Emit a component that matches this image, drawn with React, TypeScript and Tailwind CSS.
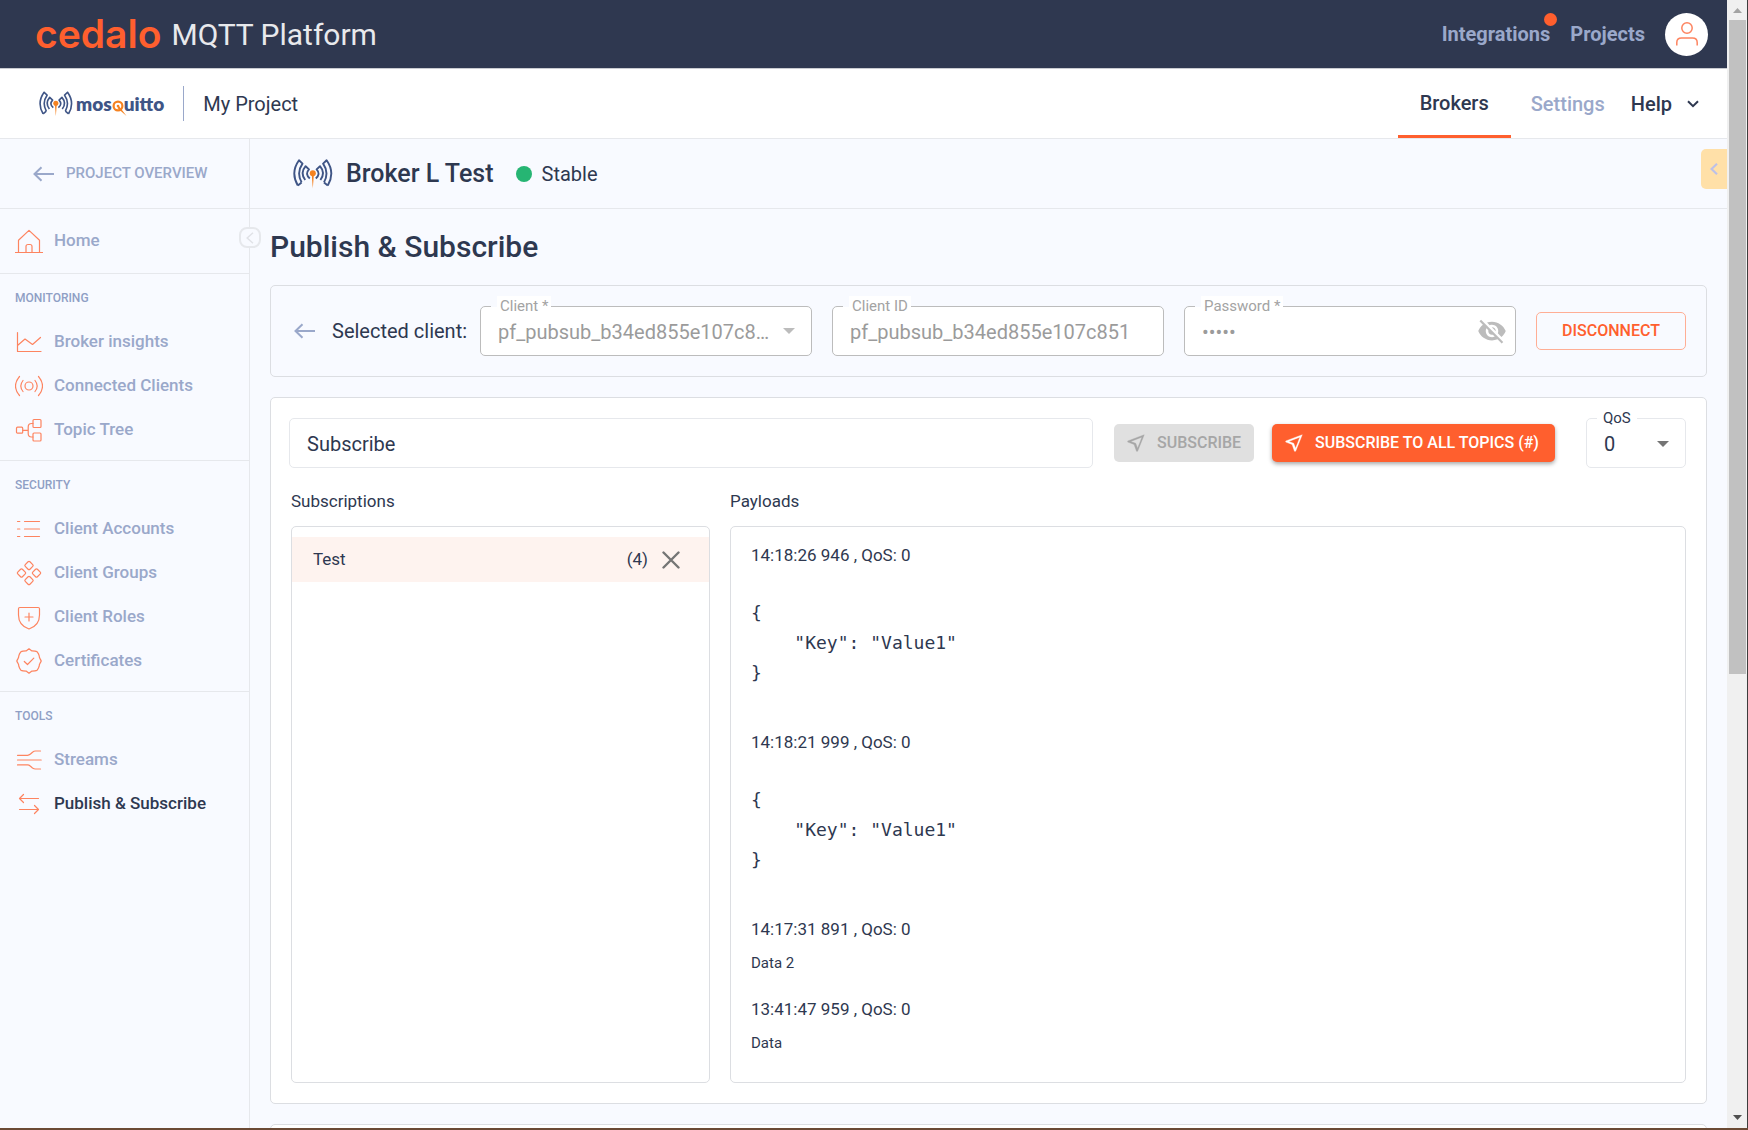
import type { ReactNode } from "react";

function Icon({ children }: { children: ReactNode }) {
  return (
    <svg
      className="h-7 w-7 shrink-0"
      viewBox="0 0 28 28"
      fill="none"
      stroke="#fd8460"
      strokeWidth="1.2"
      strokeLinecap="round"
      strokeLinejoin="round"
      aria-hidden="true"
    >
      {children}
    </svg>
  );
}

const icons: Record<string, ReactNode> = {
  home: (
    <Icon>
      <path d="M0.5 25.5H27.5M3.5 25.5V13.2L14 3.4L24.5 13.2V25.5M11 25.5V19.5Q11 17.5 13 17.5H15Q17 17.5 17 19.5V25.5" />
    </Icon>
  ),
  insights: (
    <Icon>
      <path d="M2.5 4.5V23.5H26M2.5 17.5L10 11L17.5 16.5L25.5 9.5" />
    </Icon>
  ),
  clients: (
    <Icon>
      <circle cx="14" cy="14" r="4" />
      <path d="M8 8.5Q3.6 14 8 19.5M20 8.5Q24.4 14 20 19.5M4.5 4.5Q-3.5 14 4.5 23.5M23.5 4.5Q31.5 14 23.5 23.5" />
    </Icon>
  ),
  tree: (
    <Icon>
      <rect x="1.5" y="11.2" width="6.2" height="6" rx="1" />
      <rect x="18" y="3.5" width="8" height="8" rx="1" />
      <rect x="18" y="17" width="8" height="8" rx="1" />
      <path d="M7.7 14.3H13.2M18 7.5H16.5Q13.2 7.5 13.2 11V17.5Q13.2 21 16.5 21H18" />
    </Icon>
  ),
  accounts: (
    <Icon>
      <path d="M2.5 6.5H4.8M9.5 6.5H24.5M2.5 14H4.8M9.5 14H24.5M2.5 21.5H4.8M9.5 21.5H24.5" />
    </Icon>
  ),
  groups: (
    <Icon>
      <rect x="10.7" y="3.2" width="6.6" height="6.6" rx="1.3" transform="rotate(45 14 6.5)" />
      <rect x="10.7" y="18.2" width="6.6" height="6.6" rx="1.3" transform="rotate(45 14 21.5)" />
      <rect x="3.2" y="10.7" width="6.6" height="6.6" rx="1.3" transform="rotate(45 6.5 14)" />
      <rect x="18.2" y="10.7" width="6.6" height="6.6" rx="1.3" transform="rotate(45 21.5 14)" />
    </Icon>
  ),
  roles: (
    <Icon>
      <path d="M4.8 4.5H23.2Q24.5 4.5 24.5 5.8V12C24.5 19 20 24 14 26C8 24 3.5 19 3.5 12V5.8Q3.5 4.5 4.8 4.5ZM14 10V18M10 14H18" />
    </Icon>
  ),
  certificates: (
    <Icon>
      <path d="M14 1.8L16.6 3.8C19.4 3.9 20.5 3.9 21.9 4.6C22.8 5.8 23.6 6.5 24.2 8.8C24 11 25.5 12 26.2 14C25.5 16 24 17 24.2 19.2C23.6 21.5 22.8 22.2 21.9 23.4C20.5 24.1 19.4 24.1 16.6 24.2L14 26.2L11.4 24.2C8.6 24.1 7.5 24.1 6.1 23.4C5.2 22.2 4.4 21.5 3.8 19.2C4 17 2.5 16 1.8 14C2.5 12 4 11 3.8 8.8C4.4 6.5 5.2 5.8 6.1 4.6C7.5 3.9 8.6 3.9 11.4 3.8Z" />
      <path d="M9.3 14.5L12.5 17.5L18.8 11.2" />
    </Icon>
  ),
  streams: (
    <Icon>
      <path d="M2.5 14H26.2M2.5 9.3H12.5Q14 9.3 15.5 8L17.5 6.2Q19 5 20.5 5H25.5M2.5 18.9H12.5Q14 18.9 15.5 20.2L17.5 22Q19 23 20.5 23H25.5" />
    </Icon>
  ),
  pubsub: (
    <Icon>
      <path d="M23.5 8.5H4.5M8.5 4.5L4.5 8.5L8.5 12.5M4.5 19.5H23.5M19.5 15.5L23.5 19.5L19.5 23.5" />
    </Icon>
  ),
};

function Waves({ className }: { className: string }) {
  return (
    <svg className={className} viewBox="0 0 40 30" fill="none" aria-hidden="true">
      <g stroke="#3f5586" strokeWidth="1.9" strokeLinejoin="round">
        <path d="M4.8 26.5Q-2.8 13.5 6 1.2L9.5 4.6Q3.2 13.5 8.6 23.4" />
        <path d="M12.2 21Q6.8 14 12.6 7.2L16 10.4Q11.6 15 16.8 19.4" />
        <path d="M8.6 23.4L4.8 26.5" />
        <path d="M34.8 26.5Q42.4 13.5 33.6 1.2L30.1 4.6Q36.4 13.5 31 23.4" />
        <path d="M27.4 21Q32.8 14 27 7.2L23.6 10.4Q28 15 22.8 19.4" />
        <path d="M31 23.4L34.8 26.5" />
      </g>
      <circle cx="19.8" cy="14.2" r="3" fill="#f58220" />
      <path d="M18.7 15H20.9L19.8 29.5Z" fill="#f58220" />
    </svg>
  );
}

function MosquittoLogo() {
  return (
    <a href="#mosquitto" className="flex items-center gap-[3px]" aria-label="mosquitto">
      <Waves className="h-[26px] w-[34px]" />
      <span className="font-[Lato,sans-serif] text-[19px] leading-6 font-extrabold whitespace-nowrap text-[#3f5586]">
        mos
        <svg className="inline-block h-4 w-3 overflow-visible align-[-5px]" viewBox="0 0 12 16" fill="none" role="img" aria-label="q">
          <circle cx="6" cy="6" r="4.4" stroke="#f58220" strokeWidth="2.2" />
          <circle cx="6" cy="6" r="1.3" fill="#f58220" />
          <path d="M7 6L14.5 16L5.4 8Z" fill="#f58220" />
        </svg>
        uitto
      </span>
    </a>
  );
}

function ArrowLeft() {
  return (
    <svg className="h-4 w-[21px] shrink-0" viewBox="0 0 21 16" fill="none" stroke="#9aa8ca" strokeWidth="2" aria-hidden="true">
      <path d="M21 8H1.5M8.5 1.2L1.5 8L8.5 14.8" />
    </svg>
  );
}

function Plane() {
  return (
    <svg className="h-[22px] w-[22px] shrink-0" viewBox="0 0 24 24" fill="currentColor" stroke="currentColor" strokeWidth="0.4" aria-hidden="true">
      <path d="M18.4 5.6L15.8 12.6L13.7 17.7L12 13.1L11.7 12.3L10.9 12L6.3 10.3L18.4 5.6M21 3L3 9.8V11L9.9 13.6L12.5 21H13.8L21 3Z" />
    </svg>
  );
}

function FieldLabel({ htmlFor, children }: { htmlFor: string; children: ReactNode }) {
  return (
    <label
      htmlFor={htmlFor}
      className="absolute -top-[10px] left-[17px] bg-white px-[3px] text-[15px] leading-5 text-[#a3a3a3] before:absolute before:top-[10px] before:-left-[6px] before:h-px before:w-[6px] before:bg-[#f8faff]"
    >
      {children}
    </label>
  );
}

const fieldClass =
  "h-[50px] w-full appearance-none rounded-[5px] border border-[#bcbcbc] bg-white pt-[2px] pl-[17px] text-[20px] text-[#9b9b9b] outline-none";

function NavItem({ icon, label, active }: { icon: string; label: string; active?: boolean }) {
  return (
    <li>
      <a
        href="#nav"
        className={
          active
            ? "flex h-11 items-center gap-[11px] text-[17px] font-medium text-[#2e3850]"
            : "flex h-11 items-center gap-[11px] text-[17px] font-medium text-[#9aa8ca]"
        }
      >
        {icons[icon]}
        {label}
      </a>
    </li>
  );
}

function NavSection({ title, items }: { title: string; items: [string, string][] }) {
  return (
    <section className="border-t border-[#e6e8ec] pb-2 pl-[15px]">
      <h2 className="h-[46px] pt-[14px] text-[12px] leading-5 font-medium text-[#8f9fc5]">{title}</h2>
      <ul>
        {items.map(([icon, label]) => (
          <NavItem key={label} icon={icon} label={label} active={icon === "pubsub"} />
        ))}
      </ul>
    </section>
  );
}

const messages = [
  { time: "14:18:26 946", json: true, body: '{\n    "Key": "Value1"\n}' },
  { time: "14:18:21 999", json: true, body: '{\n    "Key": "Value1"\n}' },
  { time: "14:17:31 891", json: false, body: "Data 2" },
  { time: "13:41:47 959", json: false, body: "Data" },
];

export default function App() {
  return (
    <div className="flex h-screen overflow-hidden border-b-2 border-[#6b4a35] bg-[#f8faff] font-[Roboto,sans-serif] text-[#2e3850]">
      <div className="flex min-w-0 flex-1 flex-col">
        <header className="flex h-[69px] shrink-0 items-center border-b border-[#c9cbd0] bg-[#2f3850] pr-[19px] pl-[35px]">
          <a href="#home" className="font-[Inter,sans-serif] text-[39px] leading-[44px] font-semibold text-[#ff5f2e]">
            cedalo
          </a>
          <span className="ml-[10px] text-[30px] text-[#e8e9ec]">MQTT Platform</span>
          <nav className="ml-auto flex items-center gap-5 text-[20px] font-bold text-[#9aa8ca]">
            <a href="#integrations" className="relative">
              Integrations
              <span className="absolute -top-[6px] -right-[7px] h-[13px] w-[13px] rounded-full bg-[#ff5f2e]" />
            </a>
            <a href="#projects">Projects</a>
            <button aria-label="Account" className="flex h-[43px] w-[43px] items-center justify-center rounded-full bg-white">
              <svg className="h-6 w-[22px]" viewBox="0 0 22 24" fill="none" stroke="#fd8460" strokeWidth="1.5" aria-hidden="true">
                <circle cx="11" cy="6" r="5.2" />
                <path d="M0.8 23.5V20.5Q0.8 16 5.5 16H16.5Q21.2 16 21.2 20.5V23.5" />
              </svg>
            </button>
          </nav>
        </header>

        <div className="flex h-[70px] shrink-0 items-center border-b border-[#e6e8ec] bg-white pr-7 pl-[39px]">
          <MosquittoLogo />
          <div className="ml-[19px] h-[35px] w-px bg-[#9aa8ca]" />
          <span className="ml-[19px] text-[20px]">My Project</span>
          <nav className="ml-auto flex h-full items-center text-[20px] font-medium">
            <a href="#brokers" className="flex h-full items-center border-b-[3px] border-[#ff5f2e] px-[22px] pt-[2px]">
              Brokers
            </a>
            <a href="#settings" className="ml-5 text-[#9aa8ca]">
              Settings
            </a>
            <button className="ml-[26px] flex items-center gap-[15px]">
              Help
              <svg className="h-2 w-3" viewBox="0 0 12 8" fill="none" stroke="#2e3850" strokeWidth="2" aria-hidden="true">
                <path d="M1 1.2L6 6.2L11 1.2" />
              </svg>
            </button>
          </nav>
        </div>

        <div className="flex min-h-0 flex-1">
          <aside className="relative w-[250px] shrink-0 border-r border-[#e6e8ec]">
            <a
              href="#overview"
              className="flex h-[70px] items-center gap-3 border-b border-[#e6e8ec] pl-[33px] text-[15px] font-medium text-[#9aa8ca]"
            >
              <ArrowLeft />
              PROJECT OVERVIEW
            </a>
            <ul className="h-16 pt-[10px] pl-[15px]">
              <NavItem icon="home" label="Home" />
            </ul>
            <NavSection
              title="MONITORING"
              items={[
                ["insights", "Broker insights"],
                ["clients", "Connected Clients"],
                ["tree", "Topic Tree"],
              ]}
            />
            <NavSection
              title="SECURITY"
              items={[
                ["accounts", "Client Accounts"],
                ["groups", "Client Groups"],
                ["roles", "Client Roles"],
                ["certificates", "Certificates"],
              ]}
            />
            <NavSection
              title="TOOLS"
              items={[
                ["streams", "Streams"],
                ["pubsub", "Publish & Subscribe"],
              ]}
            />
            <button
              aria-label="Collapse sidebar"
              className="absolute top-[88px] -right-3 flex h-[21px] w-[22px] items-center justify-center rounded-lg border-2 border-[#e6e8ec] bg-[#f8faff]"
            >
              <svg className="h-3 w-2" viewBox="0 0 8 12" fill="none" stroke="#e0e2e7" strokeWidth="1.5" aria-hidden="true">
                <path d="M7 0.8L1.2 6L7 11.2" />
              </svg>
            </button>
          </aside>

          <main className="flex min-w-0 flex-1 flex-col">
            <div className="relative flex h-[70px] shrink-0 items-center border-b border-[#e6e8ec] pl-[43px]">
              <Waves className="h-[30px] w-10" />
              <h2 className="ml-[13px] text-[25px] font-medium">Broker L Test</h2>
              <span className="ml-[22px] h-4 w-4 rounded-full bg-[#26b573]" />
              <span className="ml-[10px] text-[20px]">Stable</span>
              <button
                aria-label="Open help panel"
                className="absolute top-[10px] right-0 flex h-10 w-[26px] items-center justify-center rounded-l-[5px] bg-[#ffe0a8]"
              >
                <svg className="h-3 w-2" viewBox="0 0 8 12" fill="none" stroke="#bcc0e8" strokeWidth="2.2" aria-hidden="true">
                  <path d="M7 0.8L1.5 6L7 11.2" />
                </svg>
              </button>
            </div>

            <div className="flex flex-1 flex-col overflow-hidden px-5 pt-5">
              <h1 className="mb-5 text-[30px] leading-9 font-medium">Publish &amp; Subscribe</h1>

              <section className="flex shrink-0 items-center gap-5 rounded-[5px] border border-[#dcdee2] py-5 pr-5 pl-[23px]">
                <div className="-mr-[7px] flex items-center gap-[17px]">
                  <button aria-label="Back">
                    <ArrowLeft />
                  </button>
                  <span className="text-[20px] whitespace-nowrap">Selected client:</span>
                </div>
                <div className="relative min-w-0 flex-1">
                  <select id="client" disabled className={fieldClass + " pr-10 text-ellipsis opacity-100"}>
                    <option>pf_pubsub_b34ed855e107c8...</option>
                  </select>
                  <FieldLabel htmlFor="client">Client *</FieldLabel>
                  <svg className="absolute top-[22px] right-[17px] h-[6px] w-3" viewBox="0 0 12 6" fill="#bcbcbc" aria-hidden="true">
                    <path d="M0 0H12L6 6Z" />
                  </svg>
                </div>
                <div className="relative min-w-0 flex-1">
                  <input id="client-id" readOnly value="pf_pubsub_b34ed855e107c851" className={fieldClass} />
                  <FieldLabel htmlFor="client-id">Client ID</FieldLabel>
                </div>
                <div className="relative min-w-0 flex-1">
                  <input id="password" type="password" readOnly value="abcde" className={fieldClass} />
                  <FieldLabel htmlFor="password">Password *</FieldLabel>
                  <button aria-label="Show password" className="absolute top-[10px] right-[9px]">
                    <svg className="h-[30px] w-[30px]" viewBox="0 0 24 24" fill="#bcbcbc" aria-hidden="true">
                      <path d="M12 7c2.76 0 5 2.24 5 5 0 .65-.13 1.26-.36 1.83l2.92 2.92c1.51-1.26 2.7-2.89 3.43-4.75-1.73-4.39-6-7.5-11-7.5-1.4 0-2.74.25-3.98.7l2.16 2.16C10.74 7.13 11.35 7 12 7zM2 4.27l2.28 2.28.46.46C3.08 8.3 1.78 10.02 1 12c1.73 4.39 6 7.5 11 7.5 1.55 0 3.03-.3 4.38-.84l.42.42L19.73 22 21 20.73 3.27 3 2 4.27zM7.53 9.8l1.55 1.55c-.05.21-.08.43-.08.65 0 1.66 1.34 3 3 3 .22 0 .44-.03.65-.08l1.55 1.55c-.67.33-1.41.53-2.2.53-2.76 0-5-2.24-5-5 0-.79.2-1.53.53-2.2zm4.31-.78l3.15 3.15.02-.16c0-1.66-1.34-3-3-3l-.17.01z" />
                    </svg>
                  </button>
                </div>
                <button className="flex h-[38px] w-[150px] items-center justify-center rounded-[5px] border border-[#ffae95] text-[16px] font-medium text-[#ff5f2e]">
                  DISCONNECT
                </button>
              </section>

              <section className="mt-5 shrink-0 rounded-[5px] border border-[#dcdee2] bg-white px-5 py-5">
                <div className="-ml-[2px] flex items-center">
                  <input
                    aria-label="Subscribe"
                    placeholder="Subscribe"
                    className="h-[50px] min-w-0 flex-1 rounded-[5px] border border-[#e6e8ec] pt-[2px] pl-[17px] text-[20px] outline-none placeholder:text-[#2e3850]"
                  />
                  <button
                    disabled
                    className="ml-[21px] flex h-[38px] w-[140px] items-center gap-[10px] rounded-[5px] bg-[#e0e0e0] pl-[11px] text-[16px] font-medium text-[#a6a6a6]"
                  >
                    <Plane />
                    SUBSCRIBE
                  </button>
                  <button className="ml-[18px] flex h-[38px] w-[283px] items-center gap-[10px] rounded-[5px] bg-[#ff5f2e] pl-[11px] text-[16px] font-medium whitespace-nowrap text-white shadow-[0_2px_4px_rgba(0,0,0,0.35)]">
                    <Plane />
                    SUBSCRIBE TO ALL TOPICS (#)
                  </button>
                  <div className="relative ml-[31px] w-[100px]">
                    <select
                      id="qos"
                      defaultValue="0"
                      className="h-[50px] w-full appearance-none rounded-[5px] border border-[#e6e8ec] bg-white pt-[2px] pl-[17px] text-[20px] outline-none"
                    >
                      <option>0</option>
                      <option>1</option>
                      <option>2</option>
                    </select>
                    <label htmlFor="qos" className="absolute -top-[10px] left-[11px] bg-white px-[6px] text-[15px] leading-5">
                      QoS
                    </label>
                    <svg className="absolute top-[23px] right-[17px] h-[6px] w-3" viewBox="0 0 12 6" fill="#757575" aria-hidden="true">
                      <path d="M0 0H12L6 6Z" />
                    </svg>
                  </div>
                </div>

                <div className="mt-5 flex gap-5">
                  <div className="w-[419px] shrink-0">
                    <h3 className="text-[17px] leading-[26px]">Subscriptions</h3>
                    <ul className="mt-3 h-[557px] rounded-[5px] border border-[#dcdee2] pt-[10px]">
                      <li className="flex h-[45px] items-center bg-[#fef3ef] pr-[29px] pl-[21px] text-[17px]">
                        Test
                        <span className="ml-auto">(4)</span>
                        <button aria-label="Remove subscription" className="ml-[14px]">
                          <svg className="h-[18px] w-[18px]" viewBox="0 0 18 18" stroke="#757575" strokeWidth="2.4" strokeLinecap="round" aria-hidden="true">
                            <path d="M1.5 1.5L16.5 16.5M16.5 1.5L1.5 16.5" />
                          </svg>
                        </button>
                      </li>
                    </ul>
                  </div>
                  <div className="min-w-0 flex-1">
                    <h3 className="text-[17px] leading-[26px]">Payloads</h3>
                    <div className="mt-3 flex h-[557px] flex-col gap-[22px] rounded-[5px] border border-[#dcdee2] px-5 pt-4">
                      {messages.map((m) => (
                        <article key={m.time}>
                          <p className="text-[17px] leading-6">{m.time} , QoS: 0</p>
                          {m.json ? (
                            <pre className="mt-[31px] mb-5 font-['DejaVu_Sans_Mono',monospace] text-[18px] leading-[30px]">{m.body}</pre>
                          ) : (
                            <p className="mt-[10px] text-[15px] leading-6">{m.body}</p>
                          )}
                        </article>
                      ))}
                    </div>
                  </div>
                </div>
              </section>

              <section className="mt-5 h-20 shrink-0 rounded-[5px] border border-[#dcdee2] bg-white" />
            </div>
          </main>
        </div>
      </div>

      <div className="flex w-[21px] shrink-0 flex-col items-center border-r border-[#3d3d3d] bg-[#f0f0f0]" aria-hidden="true">
        <div className="flex h-5 items-center justify-center">
          <svg className="h-[5px] w-[9px]" viewBox="0 0 9 5" fill="#a3a3a3">
            <path d="M0 5H9L4.5 0Z" />
          </svg>
        </div>
        <div className="h-[58%] w-[17px] bg-[#c1c1c1]" />
        <div className="mt-auto flex h-[22px] items-center justify-center">
          <svg className="h-[5px] w-[9px]" viewBox="0 0 9 5" fill="#505050">
            <path d="M0 0H9L4.5 5Z" />
          </svg>
        </div>
      </div>
    </div>
  );
}
